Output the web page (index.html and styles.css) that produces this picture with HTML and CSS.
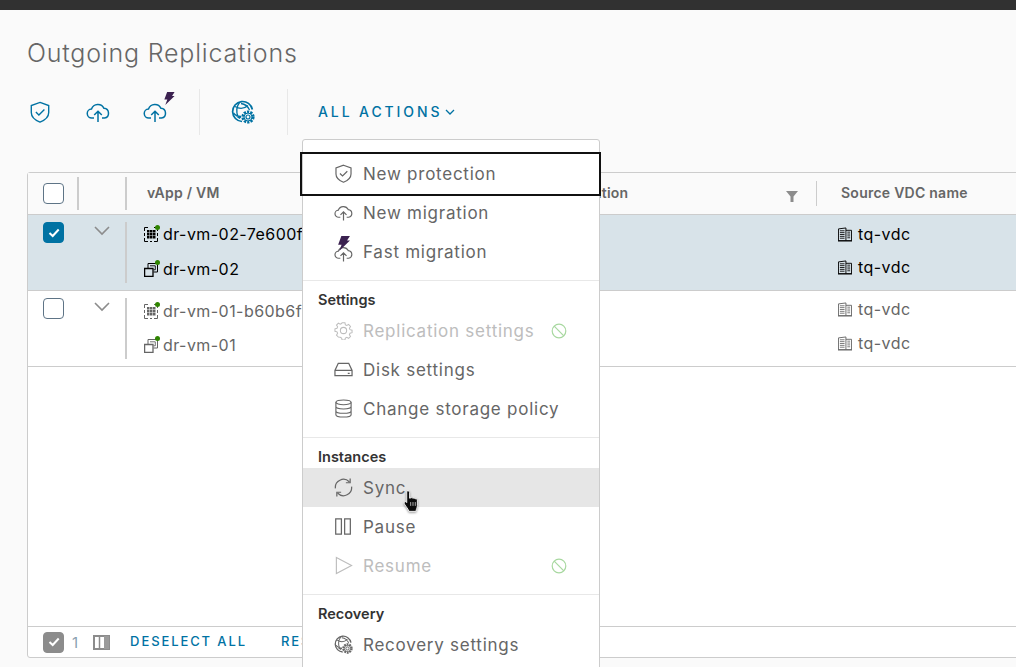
FILE: index.html
```html
<!DOCTYPE html>
<html lang="en">
<head>
<meta charset="utf-8">
<title>Outgoing Replications</title>
<link rel="stylesheet" href="styles.css">
</head>
<body>
<svg class="defs" aria-hidden="true">
  <symbol id="shield" viewBox="0 0 24 24"><path d="M12 1.500 21.500 5v7.500c0 5-4 8.300-9.500 10.500C6.500 20.800 2.500 17.500 2.500 12.500V5z" fill="none" stroke="currentColor" stroke-width="1.500"/><path d="m7.500 12 3.300 3.200 6-6" fill="none" stroke="currentColor" stroke-width="1.500"/></symbol>
  <symbol id="cloud" viewBox="0 0 24 24"><path d="M8 18H6a4.500 4.500 0 0 1-.5-9A6.800 6.800 0 0 1 18 8.300 4.900 4.900 0 0 1 18.500 18H16" fill="none" stroke="currentColor" stroke-width="1.500"/><path d="M12 22V11.500M8.200 15 12 11.200 15.800 15" fill="none" stroke="currentColor" stroke-width="1.500"/></symbol>
  <symbol id="bolt" viewBox="0 0 12 14"><path d="M4 0h8L9.300 4.200H12L2 14 4.200 8.200H1z" fill="#3b2150"/></symbol>
  <symbol id="globegear" viewBox="0 0 24 24"><path d="M11 21.500A10 10 0 1 1 21.400 9.500" fill="none" stroke="currentColor" stroke-width="1.700"/><path d="M4 6.500c4 2.500 9 2.500 13-1M2.500 13c2 2.500 5 3.500 7.500 3.500M8.500 2.500c-3 4-3.500 9-1.500 14M10 3.500c4 .5 7 3 8.500 6.500" fill="none" stroke="currentColor" stroke-width="1.300"/><path d="M5 16.500h6l-2.500 2.500z" fill="currentColor"/><circle cx="17" cy="17" r="6.800" fill="#fafafa"/><circle cx="17" cy="17" r="5.200" fill="none" stroke="currentColor" stroke-width="2.800" stroke-dasharray="2.200 1.070"/><circle cx="17" cy="17" r="4" fill="none" stroke="currentColor" stroke-width="1"/><circle cx="17" cy="17" r="2" fill="none" stroke="currentColor" stroke-width="1.200"/></symbol>
  <symbol id="vapp" viewBox="0 0 14 15"><path d="M4 .5H.5V4M10 .5h3.500V4M4 14.500H.5V11M10 14.500h3.500V11M.5 6v3M13.500 6v3M6 14.500h2" fill="none" stroke="currentColor"/><path d="M3 3h2.500v2.500H3zM6 3h2.500v2.500H6zM9 3h2.500v2.500H9zM3 6h2.500v2.500H3zM6 6h2.500v2.500H6zM9 6h2.500v2.500H9zM3 9h2.500v2.500H3zM6 9h2.500v2.500H6zM9 9h2.500v2.500H9z" fill="currentColor"/></symbol>
  <symbol id="vm" viewBox="0 0 14 15"><path d="M.6 6.500h8.400v8H.6z" fill="none" stroke="currentColor" stroke-width="1.300"/><path d="M4 6V1.500h9.500v8.500H9.500" fill="none" stroke="currentColor"/><path d="M6 3.800h5.300v4H9.500" fill="none" stroke="currentColor" stroke-width=".9"/></symbol>
  <symbol id="building" viewBox="0 0 15 15"><path d="M.5 14V1.500l8-1V14M8.500 3h6v11" fill="none" stroke="currentColor"/><path d="M2 3.500h5M2 5.500h5M2 7.500h5M2 9.500h5M2 11.500h5M10 5h3M10 7h3M10 9h3M10 11h3" fill="none" stroke="currentColor" stroke-width=".9"/><path d="M0 13.500h15V15H0z" fill="currentColor"/></symbol>
  <symbol id="gear" viewBox="0 0 20 20"><circle cx="10" cy="10" r="3.300" fill="none" stroke="currentColor" stroke-width="1.100"/><path d="M8.300 1h3.400l.5 2.400 1.700.8 2.100-1.300 2.200 2.400-1.300 2 .7 1.700 2.400.6v3l-2.400.6-.7 1.700 1.300 2.100-2.200 2.300-2.100-1.300-1.700.8-.5 2.200H8.300l-.5-2.200-1.700-.8L4 17.700l-2.200-2.300 1.300-2.100-.7-1.700L0 11V8l2.400-.6.700-1.700-1.300-2L4 1.300l2.100 1.300 1.700-.8z" transform="translate(1 1) scale(.9)" fill="none" stroke="currentColor" stroke-width="1.200"/></symbol>
  <symbol id="disk" viewBox="0 0 20 20"><path d="M4.500 3.500h11l3.500 7.500v5.500H1V11zM1 11h18M14.500 14h2" fill="none" stroke="currentColor" stroke-width="1.300"/></symbol>
  <symbol id="db" viewBox="0 0 20 20"><ellipse cx="10" cy="3.500" rx="8" ry="2.500" fill="none" stroke="currentColor" stroke-width="1.200"/><path d="M2 3.500v13C2 18 5.500 19 10 19s8-1 8-2.500v-13M2 8c0 1.500 3.500 2.500 8 2.500S18 9.500 18 8M2 12.500c0 1.500 3.500 2.500 8 2.500s8-1 8-2.500" fill="none" stroke="currentColor" stroke-width="1.200"/></symbol>
  <symbol id="sync" viewBox="0 0 20 20"><path d="M1.500 11A8.500 8.500 0 0 1 16 4M18.500 9A8.500 8.500 0 0 1 4 16M17 .5V5h-4.500M3 19.500V15h4.500" fill="none" stroke="currentColor" stroke-width="1.300"/></symbol>
  <symbol id="pause" viewBox="0 0 20 20"><path d="M1.800 2h6v16h-6zM11.200 2h6v16h-6z" fill="none" stroke="currentColor" stroke-width="1.300"/></symbol>
  <symbol id="play" viewBox="0 0 20 20"><path d="M2.500 1.500 18.500 10 2.500 18.500z" fill="none" stroke="currentColor" stroke-width="1.200"/></symbol>
  <symbol id="ban" viewBox="0 0 16 16"><circle cx="8" cy="8" r="6.800" fill="none" stroke="currentColor" stroke-width="1.200"/><path d="M3.200 3.200l9.600 9.600" stroke="currentColor" stroke-width="1.200"/></symbol>
</svg>

<header class="topbar"></header>

<main class="page">
  <h1 class="title">Outgoing Replications</h1>

  <nav class="toolbar">
    <div class="tool-group">
      <button class="tool tool-a"><svg class="ic22"><use href="#shield"/></svg></button>
      <button class="tool tool-b"><svg class="ic24"><use href="#cloud"/></svg></button>
      <button class="tool tool-c"><svg class="ic24"><use href="#cloud"/></svg><svg class="bolt"><use href="#bolt"/></svg></button>
    </div>
    <div class="tool-group group-globe">
      <button class="tool"><svg class="ic24"><use href="#globegear"/></svg></button>
    </div>
    <button class="all-actions">ALL ACTIONS<svg class="caret" viewBox="0 0 10 6"><path d="M1 1l4 4 4-4" fill="none" stroke="currentColor" stroke-width="1.300"/></svg></button>
  </nav>

  <section class="grid">
    <div class="row head">
      <div class="c-check"><span class="box"></span></div>
      <div class="c-exp head-sep"></div>
      <div class="c-name head-sep"><span class="head-label">vApp / VM</span></div>
      <div class="c-loc"><span class="head-label loc-label">Source location</span><svg class="filter" viewBox="0 0 12 12"><path d="M0 1h12L7.500 6.500V12h-3V6.500z" fill="#8c8c8c"/></svg></div>
      <div class="c-vdc"><span class="head-label">Source VDC name</span></div>
    </div>

    <div class="row selected">
      <div class="c-check"><span class="box on"><svg viewBox="0 0 12 10"><path d="M1.500 5l3.200 3 6-6.500" fill="none" stroke="#fff" stroke-width="2"/></svg></span></div>
      <div class="c-exp"><svg class="chev" viewBox="0 0 16 10"><path d="M1 1l7 7 7-7" fill="none" stroke="#8c8c8c" stroke-width="1.600"/></svg></div>
      <div class="c-name cell-sep names-a">
        <div class="line"><span class="ri"><svg class="ic14"><use href="#vapp"/></svg><i class="dot"></i></span>dr-vm-02-7e600f3c-94d1</div>
        <div class="line"><span class="ri"><svg class="ic14"><use href="#vm"/></svg><i class="dot"></i></span>dr-vm-02</div>
      </div>
      <div class="c-loc"></div>
      <div class="c-vdc vdcs-a">
        <div class="line"><svg class="ic14 bi"><use href="#building"/></svg>tq-vdc</div>
        <div class="line"><svg class="ic14 bi"><use href="#building"/></svg>tq-vdc</div>
      </div>
    </div>

    <div class="row plain">
      <div class="c-check"><span class="box"></span></div>
      <div class="c-exp"><svg class="chev" viewBox="0 0 16 10"><path d="M1 1l7 7 7-7" fill="none" stroke="#8c8c8c" stroke-width="1.600"/></svg></div>
      <div class="c-name cell-sep names-b">
        <div class="line"><span class="ri"><svg class="ic14"><use href="#vapp"/></svg><i class="dot"></i></span>dr-vm-01-b60b6f2a-11c7</div>
        <div class="line"><span class="ri"><svg class="ic14"><use href="#vm"/></svg><i class="dot"></i></span>dr-vm-01</div>
      </div>
      <div class="c-loc"></div>
      <div class="c-vdc vdcs-b">
        <div class="line"><svg class="ic14 bi"><use href="#building"/></svg>tq-vdc</div>
        <div class="line"><svg class="ic14 bi"><use href="#building"/></svg>tq-vdc</div>
      </div>
    </div>

    <div class="filler"></div>

    <footer class="foot">
      <span class="box gray"><svg viewBox="0 0 12 10"><path d="M1.500 5l3.200 3 6-6.500" fill="none" stroke="#fff" stroke-width="2"/></svg></span>
      <span class="count">1</span>
      <svg class="cols" viewBox="0 0 17 15"><path d="M1 1h15v13H1z" fill="#fff" stroke="#8c8c8c" stroke-width="2"/><path d="M11 1h5v13h-5z" fill="#9a9a9a"/><path d="M6.500 1v13" stroke="#8c8c8c" stroke-width="1.500"/></svg>
      <a class="foot-link">DESELECT ALL</a>
      <a class="foot-link foot-next">RESET</a>
    </footer>
  </section>
</main>

<div class="menu">
  <button class="item focus"><svg class="mi"><use href="#shield"/></svg>New protection</button>
  <button class="item"><svg class="mi"><use href="#cloud"/></svg>New migration</button>
  <button class="item"><span class="mi-wrap"><svg class="mi mi-low"><use href="#cloud"/></svg><svg class="mini-bolt"><use href="#bolt"/></svg></span>Fast migration</button>
  <hr class="rule">
  <h2 class="section">Settings</h2>
  <button class="item off"><svg class="mi"><use href="#gear"/></svg>Replication settings<svg class="ban"><use href="#ban"/></svg></button>
  <button class="item"><svg class="mi"><use href="#disk"/></svg>Disk settings</button>
  <button class="item"><svg class="mi"><use href="#db"/></svg>Change storage policy</button>
  <hr class="rule">
  <h2 class="section">Instances</h2>
  <button class="item hover"><svg class="mi"><use href="#sync"/></svg>Sync</button>
  <button class="item"><svg class="mi"><use href="#pause"/></svg>Pause</button>
  <button class="item off"><svg class="mi"><use href="#play"/></svg>Resume<svg class="ban"><use href="#ban"/></svg></button>
  <hr class="rule">
  <h2 class="section">Recovery</h2>
  <button class="item"><svg class="mi"><use href="#globegear"/></svg>Recovery settings</button>
</div>

<svg class="hand" viewBox="0 0 16 21"><path d="M3.200 1.300c.9-.9 2.600-.4 2.600.9v5.300l1.100-.3c.8-.5 1.600-.2 1.900.4.800-.5 1.700-.2 2 .5.900-.4 2 0 2.100 1.100v5c0 2-1 3-1.300 5.300H5.200C4.700 17.500 2.700 15.500 1 12.700c-.7-1.500.8-2.800 1.900-1.600l.3.400z" fill="#0a0a0a" stroke="#fff" stroke-width=".8"/><path d="M6.800 11v3.500M8.900 11v3.500M11 11v3.500" stroke="#fff" stroke-width=".6"/></svg>
</body>
</html>
```

FILE: styles.css
```css
* { box-sizing: border-box; }
html, body { margin: 0; height: 667px; overflow: hidden; }
body {
  position: relative;
  background: #fafafa;
  font-family: Inter, "Noto Sans", sans-serif;
  color: #666;
}
.defs { position: absolute; width: 0; height: 0; }
button { font: inherit; background: none; border: 0; padding: 0; color: inherit; }

.topbar { height: 10px; background: #313131; }
.page { padding-left: 27px; }
.title {
  margin: 0;
  padding-top: 28px;
  height: 79px;
  font-size: 25px;
  line-height: 30px;
  font-weight: 300;
  letter-spacing: .8px;
  color: #666;
}

.toolbar { display: flex; align-items: stretch; height: 46px; }
.tool-group { display: flex; align-items: center; color: #0072a3; border-right: 1px solid #e8e8e8; width: 173px; }
.group-globe { width: 88px; padding-left: 31px; }
.tool { display: flex; position: relative; }
.tool-a { margin-left: 2px; }
.tool-b { margin-left: 35px; }
.tool-c { margin-left: 33px; }
.ic22 { width: 22px; height: 24px; }
.ic24 { width: 24px; height: 24px; }
.bolt { position: absolute; left: 20px; top: -8px; width: 12px; height: 13px; }
.all-actions {
  display: flex;
  align-items: center;
  margin-left: 30px;
  padding-bottom: 2px;
  font-size: 14px;
  font-weight: 500;
  letter-spacing: 2.900px;
  color: #0072a3;
}
.caret { width: 10px; height: 6px; margin-left: 3px; margin-top: 1px; }

.grid {
  margin-top: 37px;
  width: 1040px;
  height: 486px;
  display: flex;
  flex-direction: column;
  background: #fff;
  border: 1px solid #ccc;
  border-radius: 3px;
}
.row { display: grid; grid-template-columns: 49px 48px 398px 293px 1fr; }
.head { height: 42px; background: #fafafa; border-bottom: 1px solid #ccc; align-items: center; }
.selected { height: 76px; background: #d8e3e9; border-bottom: 1px solid #ccc; color: #000; }
.plain { height: 76px; border-bottom: 1px solid #ccc; color: #666; }
.filler { flex: 1; border-bottom: 1px solid #ccc; }

.c-check { padding-left: 15px; }
.selected .c-check, .plain .c-check { padding-top: 7px; }
.box {
  display: flex;
  align-items: center;
  justify-content: center;
  width: 21px;
  height: 21px;
  background: #fff;
  border: 1px solid #5e7486;
  border-radius: 4px;
}
.box svg { width: 12px; height: 10px; }
.box.on { background: #0072a3; border-color: #0072a3; }
.box.gray { background: #8c8c8c; border-color: #8c8c8c; }

.head-sep { height: 33px; border-left: 2px solid #ccc; }
.c-exp { padding: 11px 0 0 17px; }
.head .c-exp { padding: 0; }
.chev { display: block; width: 16px; height: 10px; }
.head-label { padding-bottom: 2px; font-size: 14px; font-weight: 600; letter-spacing: .25px; color: #666; }
.loc-label { margin-left: -4px; }
.c-name.head-sep { display: flex; align-items: center; padding-left: 20px; }
.cell-sep { position: relative; overflow: hidden; padding-left: 19px; }
.cell-sep::before {
  content: "";
  position: absolute;
  left: 0;
  top: 7px;
  bottom: 7px;
  width: 2px;
  background: #ccc;
}
.line { display: flex; align-items: center; height: 24px; font-size: 16px; letter-spacing: .45px; white-space: nowrap; }
.ri { position: relative; width: 19px; height: 15px; flex: none; }
.ic14 { display: block; width: 14px; height: 15px; flex: none; }
.dot { position: absolute; left: 11px; top: -2px; width: 5px; height: 5px; border-radius: 50%; background: #2f8400; }
.bi { margin-right: 6px; }
.names-a { padding-top: 7px; }
.names-a .line + .line { margin-top: 11px; }
.names-b { padding-top: 8px; }
.names-b .line + .line { margin-top: 10px; }
.vdcs-a { padding-top: 7px; }
.vdcs-a .line + .line { margin-top: 9px; }
.vdcs-b { padding-top: 6px; }
.vdcs-b .line + .line { margin-top: 10px; }
.c-vdc { padding-left: 22px; }
.c-loc { display: flex; align-items: center; justify-content: space-between; padding-right: 18px; height: 100%; }
.filter { width: 12px; height: 12px; margin-top: 5px; }
.head .c-vdc { height: 25px; display: flex; align-items: center; padding-left: 24px; border-left: 1px solid #ccc; }

.foot { display: flex; align-items: center; height: 30px; padding-left: 15px; }
.count { margin-left: 8px; font-size: 15px; color: #8aa0b0; }
.cols { width: 17px; height: 15px; margin-left: 15px; }
.foot-link { margin-left: 20px; padding-bottom: 2px; font-size: 13px; font-weight: 500; letter-spacing: 1.900px; color: #0072a3; }
.foot-next { margin-left: 34px; }

.menu {
  position: absolute;
  left: 302px;
  top: 139px;
  width: 298px;
  height: 560px;
  padding-top: 14px;
  background: #fff;
  border: 1px solid #ccc;
  border-radius: 3px;
}
.item {
  display: flex;
  align-items: center;
  position: relative;
  width: 100%;
  height: 39px;
  padding: 0 32px 0 31px;
  font-size: 17px;
  letter-spacing: .75px;
  text-align: left;
  color: #666;
  white-space: nowrap;
}
.mi { display: block; width: 19px; height: 19px; margin-right: 10px; flex: none; }
.mi-wrap { position: relative; width: 19px; height: 19px; margin-right: 10px; flex: none; }
.mi-low { position: relative; top: 2px; }
.mini-bolt { position: absolute; left: 3px; top: -6px; width: 13px; height: 15px; }
.focus::after {
  content: "";
  position: absolute;
  left: -3px;
  right: -2px;
  top: -2px;
  bottom: -3px;
  border: 2px solid #111;
}
.hover { background: #e6e6e6; }
.off { color: #bdbdbd; }
.ban { width: 16px; height: 16px; margin-left: auto; color: #a8d8a0; }
.rule { margin: 9px 0 0; border: 0; border-top: 1px solid #e8e8e8; height: 1px; }
.section {
  margin: 0;
  padding: 9px 0 1px 15px;
  height: 30px;
  font-size: 14.500px;
  line-height: 20px;
  font-weight: 600;
  color: #333;
}
.hand { position: absolute; left: 403px; top: 490px; width: 18px; height: 23px; filter: drop-shadow(0 1px 1px rgba(0,0,0,.4)); }
```
